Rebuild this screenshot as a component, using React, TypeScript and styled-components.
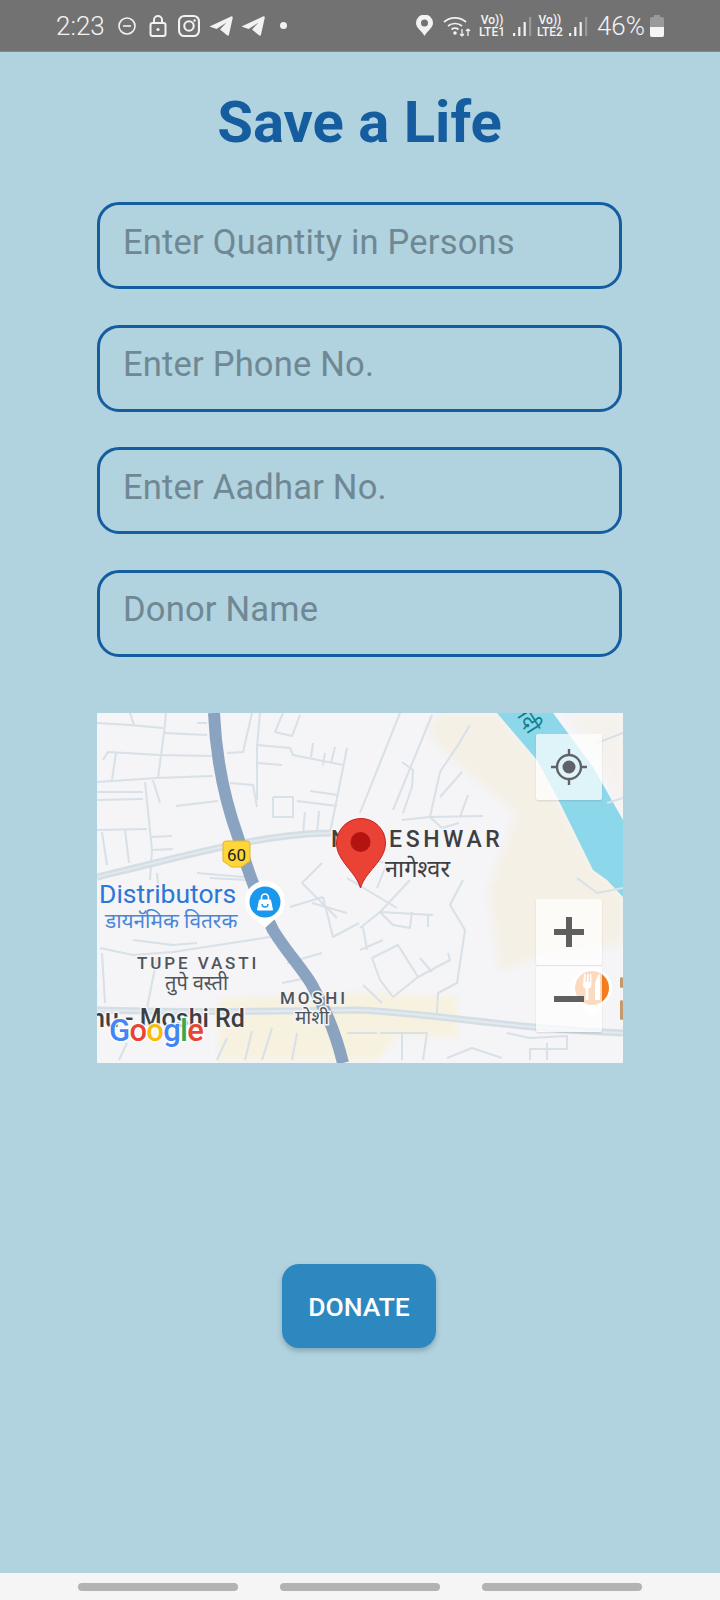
import React from 'react';
import styled, { createGlobalStyle } from 'styled-components';

const GlobalStyle = createGlobalStyle`
  html, body {
    margin: 0;
    padding: 0;
    background: #b1d2df;
  }
  * {
    box-sizing: border-box;
  }
`;

const Screen = styled.div`
  width: 720px;
  height: 1600px;
  display: flex;
  flex-direction: column;
  background: #b1d2df;
  font-family: Roboto, "Noto Sans", sans-serif;
`;

const StatusBar = styled.div`
  height: 52px;
  flex-shrink: 0;
  display: flex;
  align-items: center;
  justify-content: space-between;
  padding: 0 56px;
  background: #727272;
  border-bottom: 1px solid #7c8c94;
  color: #f2f2f2;
`;

const StatusGroup = styled.div`
  display: flex;
  align-items: center;
`;

const StatusText = styled.span`
  font-size: 26px;
  font-weight: 300;
  line-height: 1;
`;

const StatusSlot = styled.span<{ $left: number }>`
  display: flex;
  margin-left: ${p => p.$left}px;
`;

const VoLte = styled.span<{ $left: number }>`
  display: flex;
  flex-direction: column;
  align-items: center;
  margin-left: ${p => p.$left}px;
  font-size: 12px;
  line-height: 12px;
  font-weight: 500;
`;

const Content = styled.main`
  flex: 1;
  display: flex;
  flex-direction: column;
  align-items: center;
`;

const Title = styled.h1`
  margin: 32px 1px 0 0;
  font-size: 58px;
  line-height: 76px;
  font-weight: 700;
  color: #155d9f;
`;

const Fields = styled.div`
  display: flex;
  flex-direction: column;
  gap: 35.6px;
  margin: 42px 1px 0 0;
`;

const Field = styled.input`
  width: 525px;
  height: 87px;
  padding: 0 23px 8px;
  border: 3px solid #155d9f;
  border-radius: 22px;
  background: transparent;
  outline: none;
  font-family: Roboto, sans-serif;
  font-size: 34.5px;
  letter-spacing: 0.2px;
  color: #6f8894;
  &::placeholder {
    color: #6f8894;
    opacity: 1;
  }
`;

const MapFrame = styled.div`
  position: relative;
  width: 526px;
  height: 350px;
  margin-top: 56px;
  overflow: hidden;
  background: #f5f4f6;
`;

const MapControl = styled.button<{ $top: number; $height: number }>`
  position: absolute;
  left: 439px;
  top: ${p => p.$top}px;
  width: 66px;
  height: ${p => p.$height}px;
  display: flex;
  align-items: center;
  justify-content: center;
  padding: 0;
  border: none;
  border-radius: 2px;
  background: rgba(255, 255, 255, 0.72);
  box-shadow: 0 1px 2px rgba(0, 0, 0, 0.12);
`;

const ZoomDivider = styled.div`
  position: absolute;
  left: 439px;
  top: 252px;
  width: 66px;
  height: 1px;
  background: #e4e4e4;
`;

const DonateButton = styled.button`
  width: 154px;
  height: 84px;
  margin: 201px 2px 0 0;
  padding: 1px 0 0;
  border: none;
  border-radius: 17px;
  background: #2e88c0;
  box-shadow: 0 3px 5px rgba(60, 90, 110, 0.35);
  color: #ffffff;
  font-family: Roboto, sans-serif;
  font-size: 26.5px;
  font-weight: 500;
`;

const NavBar = styled.nav`
  height: 27px;
  flex-shrink: 0;
  display: flex;
  justify-content: center;
  gap: 42px;
  padding-top: 10px;
  background: #f5f5f5;
`;

const NavPill = styled.div`
  width: 160px;
  height: 8px;
  border-radius: 4px;
  background: #b3b3b3;
`;

const MinorRoads = styled.g`
  fill: none;
  stroke: #d8e0e8;
  stroke-width: 2;
  stroke-linejoin: round;
`;

const MajorRoad = styled.path<{ $width: number; $color: string }>`
  fill: none;
  stroke: ${p => p.$color};
  stroke-width: ${p => p.$width};
  stroke-linejoin: round;
`;

const Tint = styled.polygon<{ $blur: number }>`
  filter: blur(${p => p.$blur}px);
`;

const MapLabel = styled.text<{ $size: number; $color: string; $spacing?: number; $weight?: number; $plain?: boolean }>`
  font-family: Roboto, "Noto Sans", "Noto Sans Devanagari", sans-serif;
  font-size: ${p => p.$size}px;
  font-weight: ${p => p.$weight ?? 400};
  letter-spacing: ${p => p.$spacing ?? 0}px;
  fill: ${p => p.$color};
  stroke: ${p => (p.$plain ? 'none' : '#f5f4f6')};
  stroke-width: 3px;
  paint-order: stroke;
`;

const GoogleMark = styled.text`
  font-family: Roboto, sans-serif;
  font-size: 31px;
  font-weight: 500;
  letter-spacing: -0.7px;
  stroke: rgba(255, 255, 255, 0.9);
  stroke-width: 3px;
  paint-order: stroke;
`;

const minorRoads = [
  '0,10 33,12 66,15', '33,0 37,12', '69,0 67,20 61,65', '67,20 110,22', '100,10 110,10',
  '6,47 11,39 63,42 115,43', '19,40 15,67', '0,69 60,65 116,63', '56,67 63,90',
  '0,79 46,79', '0,87 46,86', '48,69 55,137 53,167', '79,93 121,88', '0,117 50,116',
  '5,119 10,152', '28,117 32,150', '53,124 75,123', '56,137 76,136', '163,0 160,34 160,87',
  '155,0 146,39 130,40', '160,32 193,35 196,42 246,52', '161,50 185,52', '133,70 156,72 160,94',
  '176,84 196,84 196,104 176,104 176,84', '213,78 241,82', '200,88 240,93', '250,35 233,120',
  '208,99 206,120', '222,98 220,120', '186,0 178,19 195,23 203,2', '216,30 214,44', '228,40 226,52', '238,34 234,50',
  '303,0 263,100', '335,2 296,97', '305,49 316,57 315,74 306,100', '373,12 361,32 343,59 333,104',
  '365,59 343,84', '371,82 363,104', '305,107 333,104 386,103', '333,104 345,115 362,110',
  '366,167 353,192 368,217 360,270 341,280 340,300', '275,245 301,232 321,264 296,284 283,267 275,245',
  '323,245 335,259', '321,264 353,247 351,240', '263,215 283,199 313,167', '283,199 336,202',
  '283,199 296,212 313,215 315,199', '331,202 331,214', '266,214 270,237', '263,237 286,227',
  '266,272 285,290', '283,320 330,320 326,347', '305,321 305,347', '410,320 433,325 470,323 470,336 433,336 433,347',
  '3,235 36,242 76,239 173,224', '36,227 76,232 100,230', '5,240 8,290', '60,245 50,295', '193,194 226,184',
  '226,184 236,224 262,210', '100,160 160,165', '60,160 62,180', '113,165 150,167', '225,150 205,170 240,205',
  '265,145 290,150 280,175', '250,165 300,195', '215,190 250,200', '190,250 225,240', '185,270 210,265',
  '30,330 22,347', '130,325 120,347', '155,318 148,347', '175,315 165,347', '200,320 195,347', '250,320 280,320',
  '350,345 375,335 405,345', '450,330 450,347', '480,165 500,180 526,175', '500,30 526,20', '510,90 526,85',
];

const LocateIcon = () => (
  <svg width="38" height="38" viewBox="0 0 38 38" fill="none" stroke="#5f6368" strokeWidth="2.4">
    <circle cx="19" cy="19" r="12" />
    <circle cx="19" cy="19" r="6.5" fill="#5f6368" stroke="none" />
    <path d="M19 1v6M19 31v6M1 19h6M31 19h6" />
  </svg>
);

const ZoomGlyph = ({ plus }: { plus?: boolean }) => (
  <svg width="30" height="30" viewBox="0 0 30 30" fill="#5f5f5f">
    <rect x="0" y="12" width="30" height="6" />
    {plus && <rect x="12" y="0" width="6" height="30" />}
  </svg>
);

const northRoad = 'M0 164 C60 150 130 130 190 123 C205 121 220 120 235 120';
const moshiRoad = 'M0 297 C90 300 180 298 263 297 C320 300 380 309 436 314 C470 317 500 319 526 320';
const highway = 'M117 0 C119 45 127 85 141 124 C150 158 165 195 176 217 C190 240 205 255 215 272 C228 295 240 325 246 350';

const MapDrawing = () => (
  <svg width="526" height="350" viewBox="0 0 526 350" style={{ display: 'block' }}>
    {/* land tints */}
    <Tint $blur={3} points="330,17 353,44 420,100 393,177 403,257 440,244 526,230 526,184 510,167 496,157 463,90 440,47 400,0 345,0" fill="#f4f0e6" />
    <Tint $blur={3} points="470,0 526,0 526,90 500,40" fill="#f5f2ee" />
    <Tint $blur={2} points="122,286 263,280 360,284 360,324 300,322 280,347 122,347" fill="#f7f2e0" />
    {/* river */}
    <polygon points="400,0 440,47 463,90 496,157 510,167 526,184 526,107 496,54 456,0" fill="#8dd7ea" />
    <MinorRoads>
      {minorRoads.map(points => <polyline key={points} points={points} />)}
    </MinorRoads>
    {/* arterial roads */}
    <MajorRoad d={northRoad} $width={7} $color="#d3dee5" />
    <MajorRoad d={northRoad} $width={2} $color="#e3e9ee" />
    <MajorRoad d={moshiRoad} $width={7} $color="#d3dee5" />
    <MajorRoad d={moshiRoad} $width={2} $color="#e3e9ee" />
    <MajorRoad d={highway} $width={12} $color="#8aa3c0" />
    {/* river label */}
    <MapLabel x="416" y="-3" $size={22} $color="#11808f" $plain transform="rotate(58 416 -3)">नदी</MapLabel>
    {/* highway shield */}
    <path d="M129 128h21a3 3 0 0 1 3 3v17l-7 5a4 4 0 0 1-2 1h-9a4 4 0 0 1-2-1l-7-5v-17a3 3 0 0 1 3-3z" fill="#fdd63a" stroke="#e6b422" />
    <text x="139.5" y="148" textAnchor="middle" fontFamily="Roboto, sans-serif" fontSize="17" fill="#222222">60</text>
    {/* place labels */}
    <MapLabel x="234" y="134" $size={23} $color="#3c4043" $spacing={3.6} $weight={500}>NAGESHWAR</MapLabel>
    <MapLabel x="288" y="164" $size={23.5} $color="#3c4043">नागेश्वर</MapLabel>
    <MapLabel x="2" y="190" $size={26.5} $color="#2b78d6">Distributors</MapLabel>
    <MapLabel x="8" y="215" $size={20.8} $color="#4a86d8">डायनॅमिक वितरक</MapLabel>
    <MapLabel x="40" y="256" $size={17} $color="#50545a" $spacing={2.9} $weight={500}>TUPE VASTI</MapLabel>
    <MapLabel x="68" y="277" $size={20} $color="#50545a">तुपे वस्ती</MapLabel>
    <MapLabel x="183" y="291" $size={17} $color="#50545a" $spacing={2.8} $weight={500}>MOSHI</MapLabel>
    <MapLabel x="198" y="311" $size={19} $color="#50545a">मोशी</MapLabel>
    <MapLabel x="-6" y="314" $size={25} $color="#3c4043" $weight={500}>hu - Moshi Rd</MapLabel>
    {/* blue shop marker */}
    <path d="M168 215l-12-11a20 20 0 1 1 24 0z" fill="#ffffff" />
    <circle cx="168" cy="189" r="20" fill="#ffffff" />
    <circle cx="168" cy="189" r="15.5" fill="#1a98ee" />
    <path d="M162.500 187h11l2 10h-15z" fill="#ffffff" stroke="#ffffff" strokeWidth="1" strokeLinejoin="round" />
    <path d="M164.500 187v-2.500a3.500 3.500 0 0 1 7 0v2.500" fill="none" stroke="#ffffff" strokeWidth="1.600" />
    <path d="M165 191a3 3 0 0 0 6 0" fill="none" stroke="#1a98ee" strokeWidth="1.400" />
    {/* restaurant marker */}
    <path d="M495 303l-13-13a20 20 0 1 1 26 0z" fill="#ffffff" />
    <circle cx="495" cy="275" r="20" fill="#ffffff" />
    <circle cx="495" cy="275" r="17" fill="#f57c1f" />
    <path d="M487 261h1.600v8h1.400v-8h1.600v8h1.400v-8h1.400v11a3.500 3.500 0 0 1-3 3.500v11.500h-2.800v-11.500a3.500 3.500 0 0 1-2.600-3.500z" fill="#ffffff" />
    <path d="M498 287v-13c0-6 2.500-12 5-13v26z" fill="#ffffff" />
    <rect x="523" y="264" width="3" height="11" rx="1.500" fill="#c59a6b" />
    <rect x="523" y="287" width="3" height="20" rx="1.500" fill="#c59a6b" />
    {/* main pin */}
    <path d="M263.500 175c-5-17-24-27-24-45a24.500 24.500 0 0 1 49 0c0 18-20 28-25 45z" fill="#ea4335" stroke="#c5221f" strokeWidth="1" />
    <circle cx="263.500" cy="129" r="10" fill="#b31412" />
    <GoogleMark x="12" y="328">
      <tspan fill="#4285f4">G</tspan>
      <tspan fill="#ea4335">o</tspan>
      <tspan fill="#fbbc05">o</tspan>
      <tspan fill="#4285f4">g</tspan>
      <tspan fill="#34a853">l</tspan>
      <tspan fill="#ea4335">e</tspan>
    </GoogleMark>
  </svg>
);

const MinusCircle = () => (
  <svg width="18" height="18" viewBox="0 0 18 18" fill="none" stroke="#f2f2f2" strokeWidth="1.600">
    <circle cx="9" cy="9" r="8" />
    <path d="M5 9h8" />
  </svg>
);

const LockIcon = () => (
  <svg width="18" height="22" viewBox="0 0 18 22" fill="none" stroke="#f2f2f2" strokeWidth="2">
    <rect x="1.500" y="8" width="15" height="13" rx="2" />
    <path d="M5 8V5a4 4 0 0 1 8 0v3" />
    <circle cx="9" cy="14.500" r="1.600" fill="#f2f2f2" stroke="none" />
  </svg>
);

const InstagramIcon = () => (
  <svg width="22" height="22" viewBox="0 0 21 21" fill="none" stroke="#f2f2f2" strokeWidth="2">
    <rect x="1" y="1" width="19" height="19" rx="5" />
    <circle cx="10.500" cy="10.500" r="4.500" />
    <circle cx="15.800" cy="5.200" r="1.200" fill="#f2f2f2" stroke="none" />
  </svg>
);

const PlaneIcon = () => (
  <svg width="24" height="22" viewBox="0 0 24 22" fill="#f2f2f2">
    <path d="M0.500 11.500 22 1.500Q24 0.800 23.700 3L20 19.500Q19.500 21.500 18 20.300L11 14.500 17.500 7.500 7.500 14z" />
  </svg>
);

const PinIcon = () => (
  <svg width="17" height="21" viewBox="0 0 17 21">
    <path fillRule="evenodd" fill="#f2f2f2" d="M8.500 21C6 16 0 13 0 8a8.500 8.500 0 0 1 17 0c0 5-6 8-8.500 13zM8.500 4.500a3.500 3.500 0 1 0 0 7 3.500 3.500 0 0 0 0-7z" />
  </svg>
);

const WifiIcon = () => (
  <svg width="28" height="24" viewBox="0 0 28 24" fill="none" stroke="#f2f2f2" strokeWidth="1.700">
    <path d="M1 8a17 17 0 0 1 22 0M5 12a11 11 0 0 1 14 0M8.500 15.500a6 6 0 0 1 7 0" />
    <circle cx="12" cy="19" r="1.800" fill="#f2f2f2" stroke="none" />
    <path d="M19 15v7M19 22l-2-2M19 22l2-2M25 22v-7M25 15l-2 2M25 15l2 2" strokeWidth="1.300" />
  </svg>
);

const SignalIcon = () => (
  <svg width="19" height="22" viewBox="0 0 19 22" fill="#f2f2f2">
    <rect x="0" y="18" width="2.200" height="3" />
    <rect x="5.200" y="12" width="2.200" height="9" />
    <rect x="10.600" y="7" width="2.200" height="14" />
    <rect x="16" y="2" width="2.200" height="19" fill="#9a9a9a" />
  </svg>
);

const BatteryIcon = () => (
  <svg width="14" height="22" viewBox="0 0 14 22">
    <rect x="4" y="0" width="6" height="3" fill="#9a9a9a" />
    <rect x="0" y="2" width="14" height="20" rx="2" fill="#9a9a9a" />
    <path d="M0 12h14v8a2 2 0 0 1-2 2H2a2 2 0 0 1-2-2z" fill="#f5f5f5" />
  </svg>
);

const App: React.FC = () => (
  <Screen>
    <GlobalStyle />
    <StatusBar>
      <StatusGroup>
        <StatusText>2:23</StatusText>
        <StatusSlot $left={13}><MinusCircle /></StatusSlot>
        <StatusSlot $left={13}><LockIcon /></StatusSlot>
        <StatusSlot $left={11}><InstagramIcon /></StatusSlot>
        <StatusSlot $left={9}><PlaneIcon /></StatusSlot>
        <StatusSlot $left={8}><PlaneIcon /></StatusSlot>
        <StatusSlot $left={15}>
          <svg width="7" height="7" viewBox="0 0 7 7"><circle cx="3.500" cy="3.500" r="3.500" fill="#f2f2f2" /></svg>
        </StatusSlot>
      </StatusGroup>
      <StatusGroup>
        <PinIcon />
        <StatusSlot $left={10}><WifiIcon /></StatusSlot>
        <VoLte $left={8}><span>Vo))</span><span>LTE1</span></VoLte>
        <StatusSlot $left={8}><SignalIcon /></StatusSlot>
        <VoLte $left={5}><span>Vo))</span><span>LTE2</span></VoLte>
        <StatusSlot $left={6}><SignalIcon /></StatusSlot>
        <StatusSlot $left={9}><StatusText>46%</StatusText></StatusSlot>
        <StatusSlot $left={5}><BatteryIcon /></StatusSlot>
      </StatusGroup>
    </StatusBar>
    <Content>
      <Title>Save a Life</Title>
      <Fields>
        <Field placeholder="Enter Quantity in Persons" />
        <Field placeholder="Enter Phone No." />
        <Field placeholder="Enter Aadhar No." />
        <Field placeholder="Donor Name" />
      </Fields>
      <MapFrame>
        <MapDrawing />
        <MapControl $top={21} $height={66}><LocateIcon /></MapControl>
        <MapControl $top={186} $height={66}><ZoomGlyph plus /></MapControl>
        <MapControl $top={253} $height={66}><ZoomGlyph /></MapControl>
        <ZoomDivider />
      </MapFrame>
      <DonateButton>DONATE</DonateButton>
    </Content>
    <NavBar>
      <NavPill />
      <NavPill />
      <NavPill />
    </NavBar>
  </Screen>
);

export default App;
